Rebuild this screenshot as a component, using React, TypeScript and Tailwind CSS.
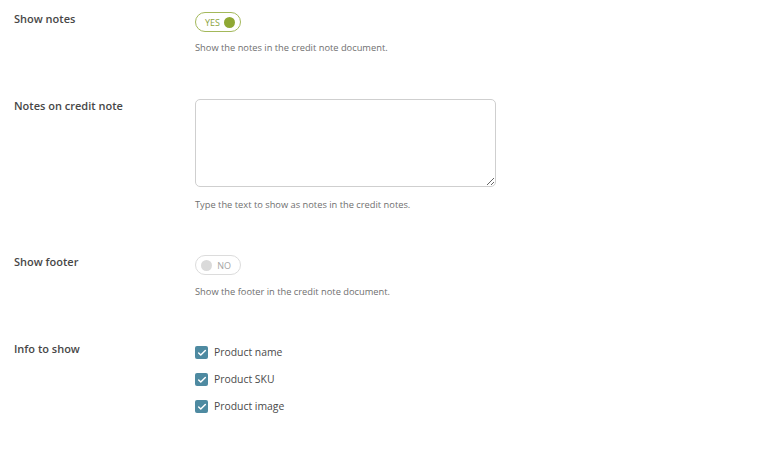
import { Check } from "lucide-react";

function Toggle({ on }: { on: boolean }) {
  if (on) {
    return (
      <div className="flex h-[20px] w-[46px] items-center justify-between rounded-full border border-[#a3b85a] pl-[9px] pr-[5px]">
        <span className="text-[9px] leading-none text-[#8ba33a]">YES</span>
        <span className="h-[11px] w-[11px] rounded-full bg-[#8fa833]" />
      </div>
    );
  }
  return (
    <div className="flex h-[20px] w-[46px] items-center justify-between rounded-full border border-[#dcdcdc] pl-[5px] pr-[9px]">
      <span className="h-[11px] w-[11px] rounded-full bg-[#dadada]" />
      <span className="text-[9px] leading-none text-[#a5a5a5]">NO</span>
    </div>
  );
}

function Row({ label, children, className }: { label: string; children: React.ReactNode; className?: string }) {
  return (
    <div className={"flex " + (className ?? "")}>
      <div className="w-[181px] shrink-0 text-[11px] font-semibold leading-[14px] text-[#474747]">{label}</div>
      <div className="flex flex-col">{children}</div>
    </div>
  );
}

function Desc({ children }: { children: React.ReactNode }) {
  return <p className="text-[9.3px] leading-[12px] text-[#6f6f6f]">{children}</p>;
}

function CheckItem({ label }: { label: string }) {
  return (
    <div className="flex h-[13px] items-center gap-[6px]">
      <span className="flex h-[13px] w-[13px] items-center justify-center rounded-[2px] bg-[#4e8aa1]">
        <Check className="h-[10px] w-[10px] text-white" strokeWidth={3.5} />
      </span>
      <span className="text-[10.4px] leading-none text-[#4a4a4a]">{label}</span>
    </div>
  );
}

export default function App() {
  return (
    <div
      className="h-[452px] w-[769px] bg-white pl-[14px] pt-[12px]"
      style={{ fontFamily: '"Open Sans", "Liberation Sans", sans-serif' }}
    >
      <Row label="Show notes">
        <Toggle on />
        <div className="mt-[10px]">
          <Desc>Show the notes in the credit note document.</Desc>
        </div>
      </Row>

      <Row label="Notes on credit note" className="mt-[45px]">
        <textarea className="h-[88px] w-[301px] rounded-[5px] border border-[#cfcfcf] outline-none" />
        <div className="mt-[12px]">
          <Desc>Type the text to show as notes in the credit notes.</Desc>
        </div>
      </Row>

      <Row label="Show footer" className="mt-[44px]">
        <Toggle on={false} />
        <div className="mt-[11px]">
          <Desc>Show the footer in the credit note document.</Desc>
        </div>
      </Row>

      <Row label="Info to show" className="mt-[44px]">
        <div className="mt-[4px] flex flex-col gap-[14px]">
          <CheckItem label="Product name" />
          <CheckItem label="Product SKU" />
          <CheckItem label="Product image" />
        </div>
      </Row>
    </div>
  );
}
